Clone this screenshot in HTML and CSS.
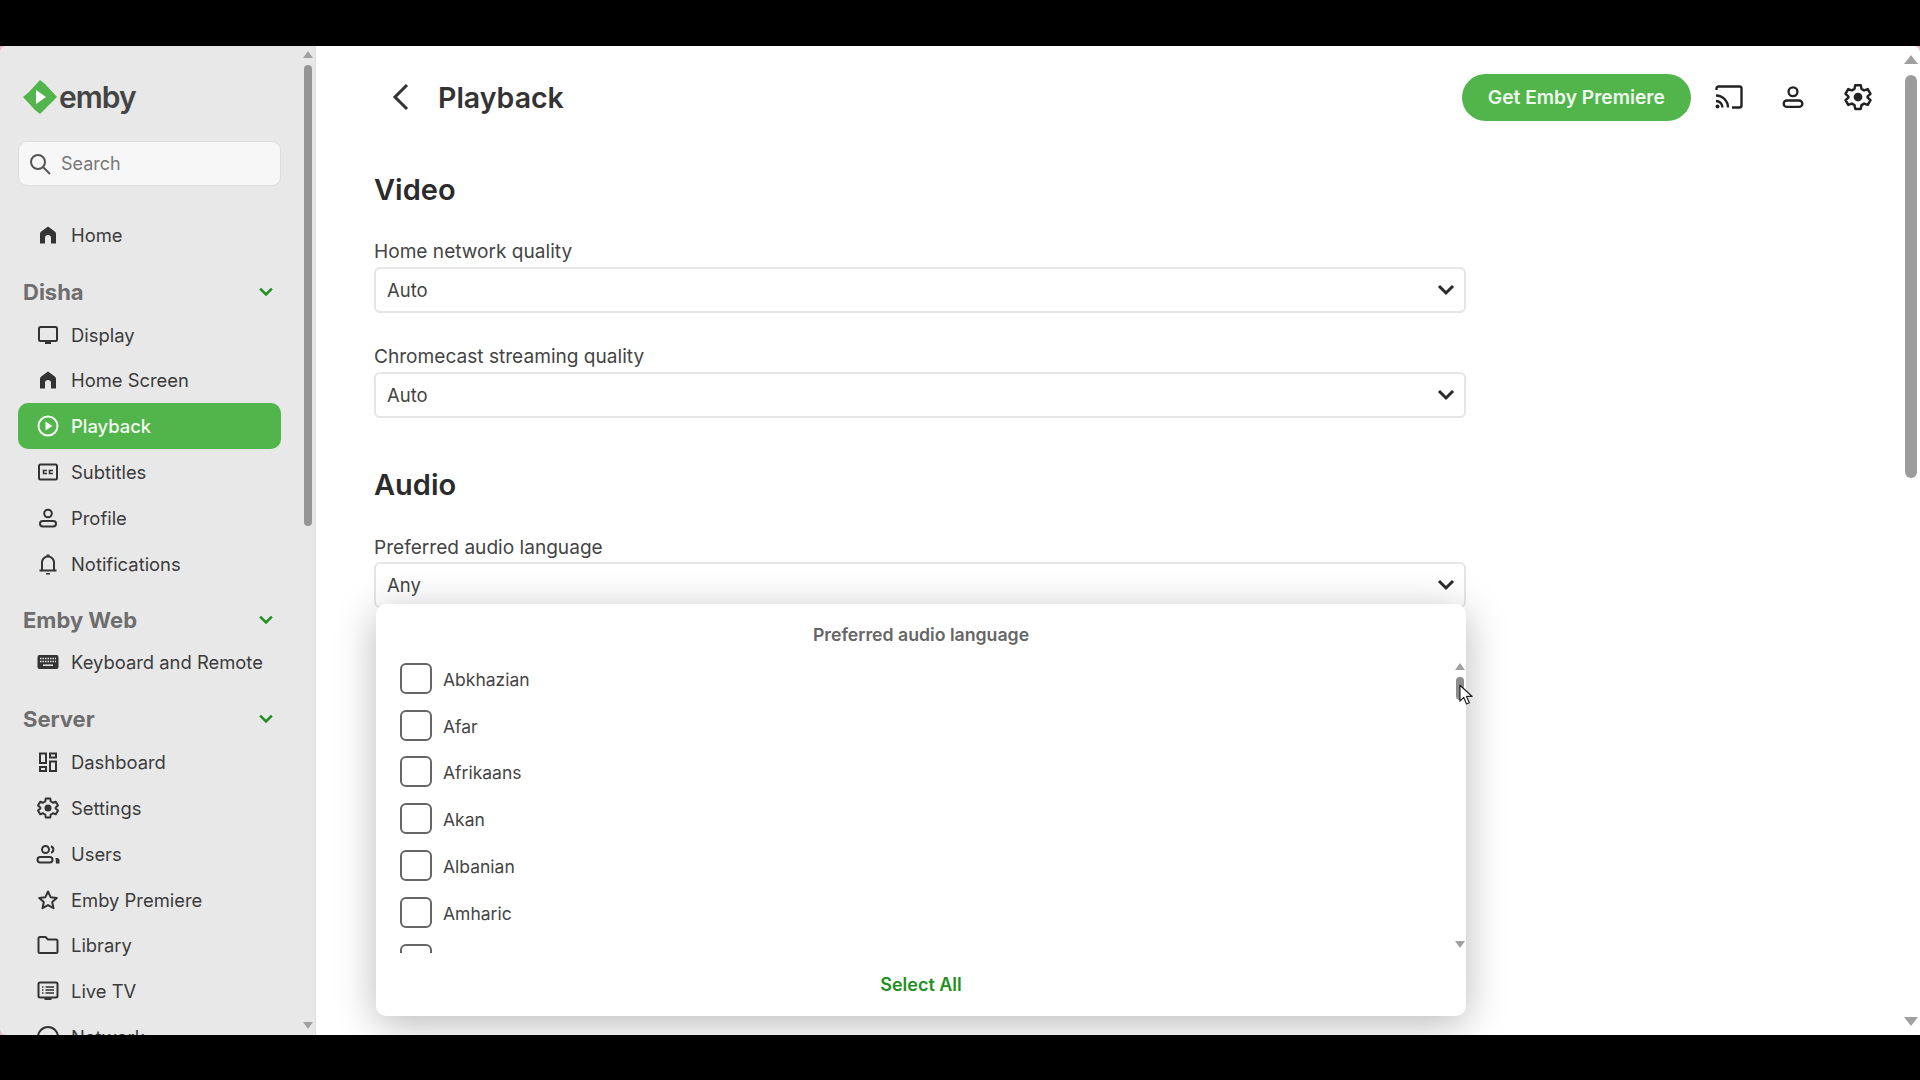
FILE: index.html
```html
<!DOCTYPE html>
<html lang="en">
<head>
  <meta charset="UTF-8">
  <title>Playback</title>
  <link rel="stylesheet" href="styles.css">
</head>
<body>
  <svg class="defs" width="0" height="0">
    <symbol id="i-home" viewBox="0 0 24 24"><path fill="currentColor" d="M12 3.500 5.200 8.600C4.400 9.200 4 10 4 11v9.500h5V15a3 3 0 0 1 6 0v5.500h5V11c0-1-.4-1.800-1.200-2.400z"/></symbol>
    <symbol id="i-display" viewBox="0 0 24 24"><path fill="none" stroke="currentColor" stroke-width="2" d="M4.500 4h15A1.500 1.500 0 0 1 21 5.500v11a1.500 1.500 0 0 1-1.500 1.500h-15A1.500 1.500 0 0 1 3 16.500v-11A1.500 1.500 0 0 1 4.500 4z"/><path fill="currentColor" d="M9 18h6v3H9z"/></symbol>
    <symbol id="i-play" viewBox="0 0 24 24"><circle cx="12" cy="12" r="9.500" fill="none" stroke="currentColor" stroke-width="2"/><path fill="currentColor" d="M9.500 7.500 16.500 12l-7 4.500z"/></symbol>
    <symbol id="i-cc" viewBox="0 0 24 24"><rect x="3" y="4.500" width="18" height="15" rx="1.500" fill="none" stroke="currentColor" stroke-width="2"/><path fill="none" stroke="currentColor" stroke-width="1.600" d="M11 10.500H7.500v3H11M17 10.500h-3.500v3H17"/></symbol>
    <symbol id="i-user" viewBox="0 0 24 24"><circle cx="12" cy="7.500" r="3.800" fill="none" stroke="currentColor" stroke-width="2"/><rect x="4" y="15" width="16" height="5.500" rx="2.750" fill="none" stroke="currentColor" stroke-width="2"/></symbol>
    <symbol id="i-bell" viewBox="0 0 24 24"><path fill="none" stroke="currentColor" stroke-width="2" d="M6 18v-7.500a6 6 0 0 1 12 0V18M3.500 18.500h17"/><path fill="currentColor" d="M10.500 2.500h3V5h-3zM10 21h4v1.500h-4z"/></symbol>
    <symbol id="i-keys" viewBox="0 0 24 24"><rect x="1.500" y="5" width="21" height="14" rx="2" fill="currentColor"/><path fill="none" stroke="#e8e8e8" stroke-width="1.500" stroke-dasharray="1.500 1" d="M4 8.500h16M4 11.500h16"/><path stroke="#e8e8e8" stroke-width="1.500" d="M7 15.200h10"/></symbol>
    <symbol id="i-dash" viewBox="0 0 24 24"><path fill="none" stroke="currentColor" stroke-width="2" d="M4 3.500h6v9.500H4zM14 3.500h6v4h-6zM14 11.500h6v9.500h-6zM4 17h6v4H4z"/></symbol>
    <symbol id="i-gear" viewBox="0 0 24 24"><path fill="none" stroke="currentColor" stroke-width="2" stroke-linejoin="round" d="M9.800 2.500h4.400l.6 3 2.100 1.200 2.900-1 2.200 3.800-2.300 2v1l2.300 2-2.200 3.800-2.900-1-2.100 1.200-.6 3H9.800l-.6-3-2.100-1.200-2.900 1-2.200-3.800 2.300-2v-1l-2.300-2 2.200-3.800 2.900 1 2.100-1.200z"/><circle cx="12" cy="12" r="3.500" fill="currentColor"/></symbol>
    <symbol id="i-users" viewBox="0 0 24 24"><circle cx="9.500" cy="7.500" r="3.500" fill="none" stroke="currentColor" stroke-width="2"/><rect x="1.500" y="15" width="15" height="5.500" rx="2.700" fill="none" stroke="currentColor" stroke-width="2"/><path fill="none" stroke="currentColor" stroke-width="2" d="M15 4.200a3.500 3.500 0 0 1 0 6.600"/><path fill="currentColor" d="M19.500 16h1.500a2.500 2.500 0 0 1 2.500 2.500v3h-3.500z"/></symbol>
    <symbol id="i-star" viewBox="0 0 24 24"><path fill="none" stroke="currentColor" stroke-width="2" stroke-linejoin="round" d="m12 3.500 2.600 5.700 6.200.7-4.600 4.200 1.300 6.100-5.500-3.100-5.500 3.100 1.300-6.100-4.600-4.200 6.200-.7z"/></symbol>
    <symbol id="i-folder" viewBox="0 0 24 24"><path fill="none" stroke="currentColor" stroke-width="2" stroke-linejoin="round" d="M2.500 5.500A1.500 1.500 0 0 1 4 4h5.500l2.500 2.500h8a1.500 1.500 0 0 1 1.500 1.500v10.500A1.500 1.500 0 0 1 20 20H4a1.500 1.500 0 0 1-1.500-1.500z"/></symbol>
    <symbol id="i-tv" viewBox="0 0 24 24"><rect x="2.500" y="3.500" width="19" height="15" rx="1.500" fill="none" stroke="currentColor" stroke-width="2"/><path stroke="currentColor" stroke-width="1.600" d="M6 8h1.500M9.500 8H18M6 11h1.500M9.500 11H18M6 14h1.500M9.500 14H18"/><path fill="currentColor" d="M8.500 18.500h7V21h-7z"/></symbol>
    <symbol id="i-globe" viewBox="0 0 24 24"><circle cx="12" cy="12" r="10" fill="none" stroke="currentColor" stroke-width="2"/></symbol>
    <symbol id="i-down" viewBox="0 0 24 24"><path fill="none" stroke="currentColor" stroke-width="3" d="m5 8 7 7 7-7"/></symbol>
  </svg>

  <div class="topbar"></div>

  <div class="app">
    <aside class="sidebar">
      <div class="logo">
        <svg class="logo-mark" viewBox="0 0 34 34"><path fill="#52b54b" d="M17 0 22 4 34 17 17 34 12 30 0 17 6 12z"/><path fill="#fff" d="m13 10 10 7-10 7z"/></svg>
        <span class="logo-text">emby</span>
      </div>

      <div class="search">
        <svg class="search-icon" viewBox="0 0 24 24"><circle cx="10" cy="10" r="7" fill="none" stroke="currentColor" stroke-width="2"/><path stroke="currentColor" stroke-width="2" d="m15 15 7 7"/></svg>
        <span>Search</span>
      </div>

      <nav class="nav first">
        <a class="nav-item"><svg class="nav-icon"><use href="#i-home"/></svg>Home</a>
      </nav>

      <div class="nav-head">Disha<svg class="nav-toggle"><use href="#i-down"/></svg></div>
      <nav class="nav">
        <a class="nav-item"><svg class="nav-icon"><use href="#i-display"/></svg>Display</a>
        <a class="nav-item"><svg class="nav-icon"><use href="#i-home"/></svg>Home Screen</a>
        <a class="nav-item active"><svg class="nav-icon"><use href="#i-play"/></svg>Playback</a>
        <a class="nav-item"><svg class="nav-icon"><use href="#i-cc"/></svg>Subtitles</a>
        <a class="nav-item"><svg class="nav-icon"><use href="#i-user"/></svg>Profile</a>
        <a class="nav-item"><svg class="nav-icon"><use href="#i-bell"/></svg>Notifications</a>
      </nav>

      <div class="nav-head web">Emby Web<svg class="nav-toggle"><use href="#i-down"/></svg></div>
      <nav class="nav">
        <a class="nav-item"><svg class="nav-icon"><use href="#i-keys"/></svg>Keyboard and Remote</a>
      </nav>

      <div class="nav-head">Server<svg class="nav-toggle"><use href="#i-down"/></svg></div>
      <nav class="nav">
        <a class="nav-item"><svg class="nav-icon"><use href="#i-dash"/></svg>Dashboard</a>
        <a class="nav-item"><svg class="nav-icon"><use href="#i-gear"/></svg>Settings</a>
        <a class="nav-item"><svg class="nav-icon"><use href="#i-users"/></svg>Users</a>
        <a class="nav-item"><svg class="nav-icon"><use href="#i-star"/></svg>Emby Premiere</a>
        <a class="nav-item"><svg class="nav-icon"><use href="#i-folder"/></svg>Library</a>
        <a class="nav-item"><svg class="nav-icon"><use href="#i-tv"/></svg>Live TV</a>
        <a class="nav-item"><svg class="nav-icon"><use href="#i-globe"/></svg>Network</a>
      </nav>

      <div class="scroll side-scroll">
        <i class="arrow up"></i>
        <i class="thumb"></i>
        <i class="arrow down"></i>
      </div>
    </aside>

    <main class="main">
      <header class="head">
        <svg class="back" viewBox="0 0 24 32"><path fill="none" stroke="#333" stroke-width="3" d="M19 4 7 16l12 12"/></svg>
        <h1>Playback</h1>
        <button class="premiere">Get Emby Premiere</button>
        <svg class="head-icon cast" viewBox="0 0 28 24"><path fill="none" stroke="#222" stroke-width="2.400" d="M1.500 5V3.500a2 2 0 0 1 2-2h21a2 2 0 0 1 2 2v17a2 2 0 0 1-2 2H17"/><path fill="none" stroke="#222" stroke-width="2.400" d="M1 10.500A12 12 0 0 1 13 22.500M1 16a6.500 6.500 0 0 1 6.500 6.500"/><circle cx="2.500" cy="21.500" r="2" fill="#222"/></svg>
        <svg class="head-icon user"><use href="#i-user"/></svg>
        <svg class="head-icon gear"><use href="#i-gear"/></svg>
      </header>

      <section class="form">
        <h2>Video</h2>
        <div class="field">
          <label>Home network quality</label>
          <div class="select">Auto<svg class="select-arrow"><use href="#i-down"/></svg></div>
        </div>
        <div class="field">
          <label>Chromecast streaming quality</label>
          <div class="select">Auto<svg class="select-arrow"><use href="#i-down"/></svg></div>
        </div>

        <h2 class="audio">Audio</h2>
        <div class="field field-audio">
          <label>Preferred audio language</label>
          <div class="select">Any<svg class="select-arrow"><use href="#i-down"/></svg></div>
        </div>
      </section>

      <div class="dialog">
        <div class="dialog-title">Preferred audio language</div>
        <ul class="lang-list">
          <li><span class="check"></span>Abkhazian</li>
          <li><span class="check"></span>Afar</li>
          <li><span class="check"></span>Afrikaans</li>
          <li><span class="check"></span>Akan</li>
          <li><span class="check"></span>Albanian</li>
          <li><span class="check"></span>Amharic</li>
          <li><span class="check"></span>Arabic</li>
        </ul>
        <div class="dialog-foot">Select All</div>
        <div class="scroll dialog-scroll">
          <i class="arrow up"></i>
          <i class="thumb"></i>
          <i class="arrow down"></i>
        </div>
      </div>

      <svg class="cursor" viewBox="0 0 16 24"><path fill="#fff" stroke="#222" stroke-width="1.300" stroke-linejoin="round" d="M1 1v17l4-4 3 7 3-1.300-3-6.700h6z"/></svg>

      <div class="scroll main-scroll">
        <i class="arrow up"></i>
        <i class="thumb"></i>
        <i class="arrow down"></i>
      </div>
    </main>
  </div>

  <div class="bottombar"></div>
</body>
</html>
```

FILE: styles.css
```css
* { box-sizing: border-box; }
html, body { margin: 0; height: 1080px; overflow: hidden; }
body { font-family: Inter, "Noto Sans", sans-serif; background: #000; color: #333; }
.defs { position: absolute; }

.topbar { height: 46px; background: #000; }
.bottombar { height: 45px; background: #000; }
.app { display: flex; height: 989px; background: #eeb4c6; overflow: hidden; }

/* sidebar */
.sidebar { position: relative; flex: none; width: 316px; padding: 0 34px 0 18px; background: #e8e8e8; border-right: 1px solid #dcdcdc; border-radius: 6px 0 0 6px; overflow: hidden; }
.logo { display: flex; align-items: center; gap: 2px; height: 95px; padding: 6px 0 0 5px; }
.logo-mark { width: 34px; height: 34px; }
.logo-text { font-size: 30px; font-weight: 600; letter-spacing: -1px; color: #444; line-height: 34px; }
.search { display: flex; align-items: center; gap: 9px; height: 45px; padding-left: 9px; background: #f7f7f7; border: 1px solid #dcdcdc; border-radius: 9px; font-size: 18px; color: #777; }
.search-icon { width: 24px; height: 24px; color: #555; }

.nav { display: flex; flex-direction: column; }
.nav.first { margin-top: 26px; }
.nav-item { display: flex; align-items: center; gap: 11px; height: 45.8px; padding-left: 18px; border-radius: 10px; font-size: 18.400px; color: #3c3c3c; }
.nav-icon { flex: none; width: 24px; height: 24px; color: #333; }
.nav-item.active { background: #52b54b; color: #f4fbf3; font-weight: 500; }
.nav-item.active .nav-icon { color: #f4fbf3; }
.nav-head { display: flex; align-items: center; justify-content: space-between; height: 40px; margin-top: 14px; padding: 0 5px; font-size: 22px; font-weight: 700; color: #6e6e6e; }
.nav-head.web { margin-top: 13px; }
.nav-toggle { width: 20px; height: 20px; color: #1f8f1f; }

/* scrollbars */
.scroll { position: absolute; }
.scroll .thumb { position: absolute; left: 0; right: 0; background: #9c9c9c; border-radius: 6px; }
.arrow { position: absolute; left: 50%; transform: translateX(-50%); width: 0; height: 0; border-left: 7px solid transparent; border-right: 7px solid transparent; }
.arrow.up { border-bottom: 9px solid #a0a0a0; }
.arrow.down { border-top: 9px solid #a0a0a0; }

.side-scroll { top: 0; bottom: 0; left: 304px; width: 8px; }
.side-scroll .thumb { top: 19px; height: 461px; background: #959595; }
.side-scroll .arrow { border-left-width: 5px; border-right-width: 5px; }
.side-scroll .arrow.up { top: 5px; border-bottom-width: 7px; }
.side-scroll .arrow.down { bottom: 6px; border-top-width: 7px; }

.main-scroll { top: 0; bottom: 0; right: 3px; width: 12px; }
.main-scroll .thumb { top: 29px; height: 403px; }
.main-scroll .arrow.up { top: 9px; }
.main-scroll .arrow.down { bottom: 9px; }

.dialog-scroll { top: 59px; bottom: 68px; right: 2px; width: 8px; }
.dialog-scroll .thumb { top: 14px; height: 23px; background: #8c8c8c; }
.dialog-scroll .arrow { border-left-width: 5px; border-right-width: 5px; }
.dialog-scroll .arrow.up { top: 0; border-bottom-width: 7px; }
.dialog-scroll .arrow.down { bottom: 0; border-top-width: 7px; }

/* main column */
.main { position: relative; flex: 1; background: #fff; border-radius: 0 6px 0 0; overflow: hidden; }
.head { display: flex; align-items: center; height: 102px; }
.back { width: 24px; height: 32px; margin-left: 72px; }
h1 { margin: 0 0 0 26px; font-size: 28.500px; font-weight: 600; color: #333; }
.premiere { margin-left: 898px; width: 229px; height: 47px; border: 0; border-radius: 24px; background: #52b54b; color: #f0f9ef; font: 600 19.200px Inter, sans-serif; }
.head-icon { flex: none; color: #222; }
.cast { width: 28px; height: 24px; margin-left: 24px; }
.user { width: 28px; height: 28px; margin-left: 36px; }
.gear { width: 30px; height: 30px; margin-left: 36px; }

.form { padding: 0 0 0 58px; width: 1150px; }
h2 { display: flex; align-items: center; height: 40px; margin: 21px 0 0; font-size: 29px; font-weight: 600; color: #2b2b2b; }
h2.audio { margin-top: 46px; }
.field { margin-top: 30px; }
.field + .field { margin-top: 31px; }
.field label { display: block; height: 24px; margin-bottom: 4px; line-height: 24px; font-size: 19.100px; color: #444; }
.field-audio { margin-top: 31px; }
.field-audio label { margin-bottom: 3px; }
.select { position: relative; display: flex; align-items: center; height: 46px; padding-left: 11px; background: #fff; border: 2px solid #e6e6e6; border-radius: 6px; font-size: 18.500px; color: #444; }
.select-arrow { position: absolute; right: 6px; top: 9px; width: 24px; height: 24px; color: #2a2a2a; }

/* dropdown dialog */
.dialog { position: absolute; left: 60px; top: 558px; display: flex; flex-direction: column; width: 1090px; height: 412px; background: #fff; border-radius: 10px; box-shadow: 0 8px 40px rgba(0, 0, 0, .28); }
.dialog-title { height: 42px; padding-top: 20px; line-height: 22px; text-align: center; font-size: 17.700px; font-weight: 600; color: #666; }
.lang-list { flex: none; height: 298px; margin: 9px 0 0; padding: 0 0 0 24px; list-style: none; overflow: hidden; }
.lang-list li { display: flex; align-items: center; gap: 11px; height: 46.800px; padding-top: 2px; font-size: 17.500px; color: #444; }
.check { flex: none; width: 32px; height: 31px; margin-top: -2px; border: 2px solid #666; border-radius: 6px; }
.dialog-foot { flex: 1; display: flex; align-items: center; justify-content: center; font-size: 18px; font-weight: 600; color: #1f8f1f; }
.cursor { position: absolute; left: 1143px; top: 638px; width: 15px; height: 23px; }
```
